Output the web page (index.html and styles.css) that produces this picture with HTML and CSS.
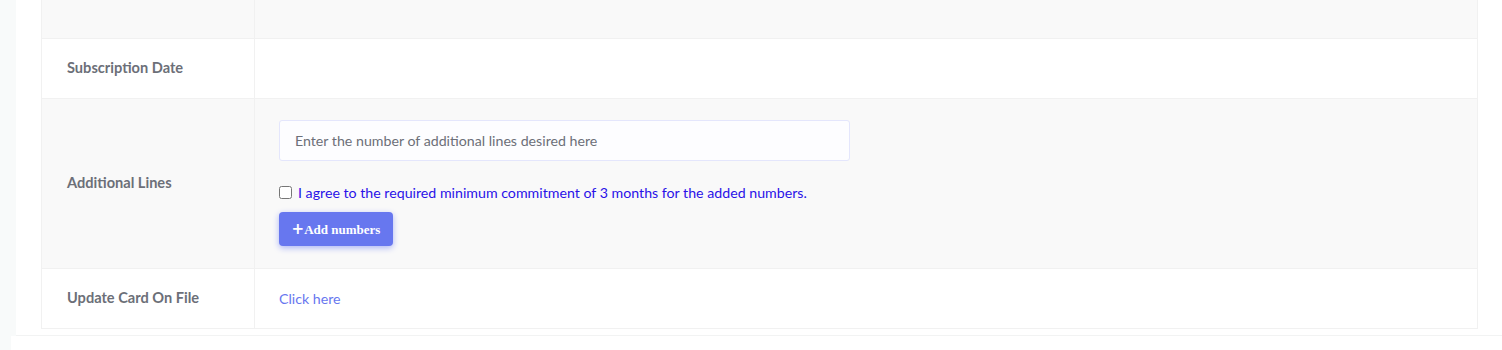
FILE: index.html
```html
<!DOCTYPE html>
<html>
<head>
<meta charset="utf-8">
<link rel="stylesheet" href="styles.css">
</head>
<body>
<div class="page">
  <div class="card">
    <table class="details">
      <tr class="row-gray row-top">
        <td class="label"></td>
        <td class="value"></td>
      </tr>
      <tr class="row-white">
        <td class="label"><span class="label-text">Subscription Date</span></td>
        <td class="value"></td>
      </tr>
      <tr class="row-gray">
        <td class="label"><span class="label-text">Additional Lines</span></td>
        <td class="value form-cell">
          <input class="lines-input" type="text" placeholder="Enter the number of additional lines desired here">
          <label class="agree">
            <input type="checkbox" class="agree-box">
            <span>I agree to the required minimum commitment of 3 months for the added numbers.</span>
          </label>
          <button class="btn-add" type="button"><span class="plus">+</span>Add numbers</button>
        </td>
      </tr>
      <tr class="row-white">
        <td class="label"><span class="label-text">Update Card On File</span></td>
        <td class="value"><a class="link" href="#">Click here</a></td>
      </tr>
    </table>
  </div>
  <div class="footer"></div>
</div>
</body>
</html>
```
FILE: styles.css
```css
html, body {
  margin: 0;
  padding: 0;
  background: #f8fafa;
  font-family: "Lato", "Open Sans", sans-serif;
  height: 350px;
  overflow: hidden;
}
.page {
  height: 350px;
}
.card {
  margin-left: 16px;
  background: #fff;
  padding: 0 25px 6px 25px;
  border-bottom: 1px solid #f2f3f3;
}
.details {
  width: 1437px;
  border-collapse: collapse;
  border-left: 1px solid #f1f1f1;
  border-right: 1px solid #f1f1f1;
}
.details td {
  border-top: 1px solid #f1f1f1;
  border-bottom: 1px solid #f1f1f1;
  padding: 0;
}
.details td.label {
  width: 187px;
  padding-left: 25px;
  border-right: 1px solid #f1f1f1;
  font-size: 14.6px;
  font-weight: 700;
  color: #6c6f78;
}
.label-text {
  display: inline-block;
  margin-bottom: 2px;
}
.row-gray td { background: #f9f9f9; }
.row-white td { background: #fff; }
.row-top td { height: 38px; border-top: none; }
.row-white td { height: 59px; }
.value { padding-left: 24px !important; }
.form-cell {
  padding-top: 21px !important;
  padding-bottom: 22px !important;
  vertical-align: top;
}
.lines-input {
  display: block;
  box-sizing: border-box;
  width: 571px;
  height: 41px;
  background: #fdfdff;
  border: 1px solid #e4e6fc;
  border-radius: 3px;
  padding: 0 15px;
  font-family: "Lato", sans-serif;
  font-size: 14.2px;
  color: #495057;
  outline: none;
}
.lines-input::placeholder {
  color: #6c6f78;
}
.agree {
  display: flex;
  align-items: center;
  margin-top: 23px;
  font-family: "Lato", sans-serif;
  font-size: 14.2px;
  color: #2a12e8;
}
.agree-box {
  margin: 0 6px 0 0;
  width: 13px;
  height: 13px;
}
.btn-add {
  display: block;
  margin-top: 11px;
  width: 114px;
  height: 34px;
  background: #6777ef;
  border: none;
  border-radius: 4px;
  box-shadow: 0 2px 6px #acb5f6;
  color: #fff;
  font-family: "Liberation Serif", serif;
  font-weight: 700;
  font-size: 13px;
  padding: 0;
}
.plus {
  font-family: "DejaVu Sans", sans-serif;
  font-weight: 700;
  font-size: 15px;
}
.link {
  display: inline-block;
  margin-bottom: 3px;
  color: #6777ef;
  text-decoration: none;
  font-family: "Lato", sans-serif;
  font-size: 14.2px;
}
.footer {
  margin-left: 11px;
  height: 15px;
  background: #fff;
}
```
